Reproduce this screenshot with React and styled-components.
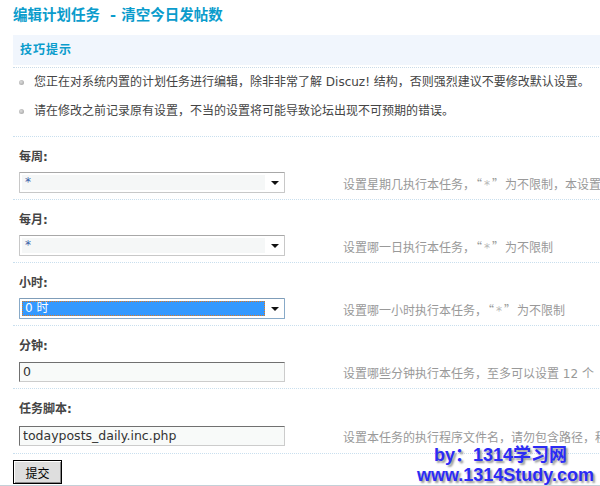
import React from 'react';
import styled, { createGlobalStyle } from 'styled-components';

const GlobalStyle = createGlobalStyle`
  html, body {
    margin: 0;
    padding: 0;
    background: #fff;
  }
  body {
    font-family: "DejaVu Sans", "Noto Sans CJK SC", sans-serif;
    font-size: 12px;
    color: #333;
  }
`;

const Page = styled.div`
  position: relative;
  width: 600px;
  height: 486px;
  overflow: hidden;
  box-sizing: border-box;
  padding: 5px 0 0 13px;
  border-bottom: 1px solid #c4d0d8;
  white-space: nowrap;
`;

const Content = styled.div`
  width: 720px;
`;

const Title = styled.h3`
  margin: 0 0 10px;
  height: 20px;
  line-height: 20px;
  font-size: 14.5px;
  font-weight: bold;
  color: #0a9ccc;
`;

const TipsHead = styled.div`
  padding-bottom: 2px;
  border-bottom: 1px dotted #c9dbe8;
`;

const TipsTitle = styled.div`
  height: 30px;
  line-height: 30px;
  padding-left: 7px;
  background: #f1f6fd;
  font-size: 12px;
  font-weight: bold;
  letter-spacing: 1px;
  color: #0a9ccc;
`;

const TipList = styled.ul`
  margin: 0;
  padding: 0 0 10px;
  list-style: none;
`;

const Tip = styled.li`
  position: relative;
  line-height: 29px;
  padding-left: 21px;
  color: #444;

  &::before {
    content: "";
    position: absolute;
    left: 6px;
    top: 12px;
    width: 5px;
    height: 5px;
    border-radius: 50%;
    background: radial-gradient(circle at 40% 40%, #ddd, #999);
  }
`;

const Block = styled.div`
  border-top: 1px dotted #c9dfee;
`;

const Label = styled.div`
  height: 18px;
  line-height: 18px;
  padding: 11px 0 0 6px;
  font-weight: bold;
  color: #444;
`;

const FieldRow = styled.div`
  display: grid;
  grid-template-columns: 330px 1fr;
  align-items: center;
  height: ${p => p.$h || 33}px;
`;

const FieldCell = styled.div`
  padding-left: 6px;
`;

const Desc = styled.div`
  color: #999;
  padding-top: 2px;
`;

const Quote = styled.span`
  font-family: "Noto Sans CJK SC", sans-serif;
  padding: 0 1px;

  b {
    font-family: "DejaVu Sans", sans-serif;
    font-weight: normal;
    color: #b8b8b8;
    padding: 0 2px;
  }
`;

const SelectBox = styled.div`
  display: flex;
  align-items: stretch;
  width: 266px;
  height: 21px;
  box-sizing: border-box;
  border: 1px solid ${p => (p.$active ? '#88aac8' : '#c8c8c8')};
  border-top-color: ${p => (p.$active ? '#7f9db9' : '#a8a8a8')};
  border-radius: 1px;
  background: #fff;
`;

const SelectValue = styled.div`
  flex: 1;
  margin: 2px 0 2px 2px;
  padding-left: 3px;
  line-height: 15px;
  font-size: 12px;
  color: ${p => (p.$active ? '#fff' : '#3a5fa8')};
  background: ${p => (p.$active ? '#3399ff' : '#f5f7f7')};
  outline: ${p => (p.$active ? '1px dotted #e07a20' : 'none')};
  outline-offset: -1px;
`;

const SelectArrow = styled.div`
  width: 19px;
  display: flex;
  align-items: center;
  justify-content: center;

  &::after {
    content: "";
    border-left: 4px solid transparent;
    border-right: 4px solid transparent;
    border-top: 4px solid #111;
  }
`;

const TextInput = styled.input`
  width: 266px;
  height: 20px;
  box-sizing: border-box;
  margin: 0;
  padding: 0 3px;
  border: 1px solid #ccc;
  border-top-color: #707070;
  border-left-color: #707070;
  background: #f8faf9;
  font-family: "DejaVu Sans", sans-serif;
  font-size: 12.5px;
  color: #333;
  outline: none;
`;

const Footer = styled.div`
  border-top: 1px dotted #c9dfee;
  padding-top: 6px;
`;

const SubmitButton = styled.button`
  width: 49px;
  height: 24px;
  margin: 0;
  padding: 0;
  border: 1px solid #000;
  box-shadow: inset 1px 1px 0 #fff, inset -1px -1px 0 #888;
  background: #dedede;
  font-family: "Noto Sans CJK SC", sans-serif;
  font-size: 12px;
  color: #000;
`;

const Watermark = styled.div`
  position: absolute;
  right: 6px;
  bottom: 0;
  text-align: right;
  font-family: "Liberation Sans", "Noto Sans CJK SC", sans-serif;
  font-size: 18px;
  font-weight: bold;
  line-height: 20px;
  color: #2b2bf5;
  text-shadow: 2px 2px 2px #9a9a9a;
`;

const WatermarkLine = styled.div`
  padding-right: ${p => p.$indent || 0}px;
`;

const Star = () => (
  <Quote>“<b>*</b>”</Quote>
);

const Select = ({ value, active }) => (
  <SelectBox $active={active}>
    <SelectValue $active={active}>{value}</SelectValue>
    <SelectArrow />
  </SelectBox>
);

const fields = [
  { label: '每周:', type: 'select', value: '*', desc: <>设置星期几执行本任务，<Star />为不限制，本设置</> },
  { label: '每月:', type: 'select', value: '*', desc: <>设置哪一日执行本任务，<Star />为不限制</> },
  { label: '小时:', type: 'select', value: '0 时', active: true, desc: <>设置哪一小时执行本任务，<Star />为不限制</> },
  { label: '分钟:', type: 'input', value: '0', desc: '设置哪些分钟执行本任务，至多可以设置 12 个' },
  { label: '任务脚本:', type: 'input', value: 'todayposts_daily.inc.php', desc: '设置本任务的执行程序文件名，请勿包含路径，程', h: 35 },
];

export default function App() {
  return (
    <>
      <GlobalStyle />
      <Page>
        <Content>
          <Title>编辑计划任务&nbsp; - 清空今日发帖数</Title>
          <TipsHead>
            <TipsTitle>技巧提示</TipsTitle>
          </TipsHead>
          <TipList>
            <Tip>您正在对系统内置的计划任务进行编辑，除非非常了解 Discuz! 结构，否则强烈建议不要修改默认设置。</Tip>
            <Tip>请在修改之前记录原有设置，不当的设置将可能导致论坛出现不可预期的错误。</Tip>
          </TipList>
          {fields.map(f => (
            <Block key={f.label}>
              <Label>{f.label}</Label>
              <FieldRow $h={f.h}>
                <FieldCell>
                  {f.type === 'select'
                    ? <Select value={f.value} active={f.active} />
                    : <TextInput defaultValue={f.value} />}
                </FieldCell>
                <Desc>{f.desc}</Desc>
              </FieldRow>
            </Block>
          ))}
          <Footer>
            <SubmitButton>提交</SubmitButton>
          </Footer>
        </Content>
        <Watermark>
          <WatermarkLine $indent={27}>by：1314学习网</WatermarkLine>
          <WatermarkLine>www.1314Study.com</WatermarkLine>
        </Watermark>
      </Page>
    </>
  );
}
